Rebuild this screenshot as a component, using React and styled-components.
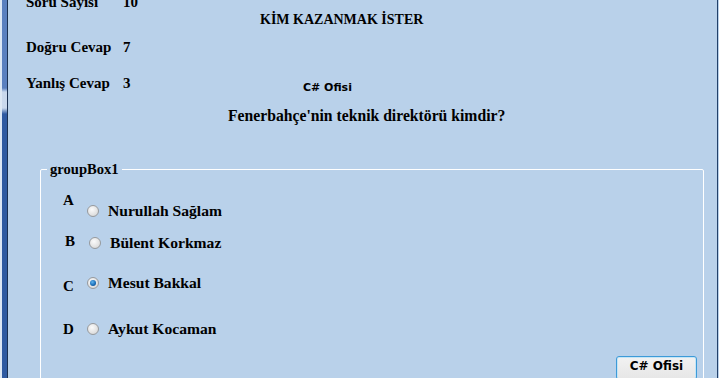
import React from 'react';
import styled, { createGlobalStyle } from 'styled-components';

const BG = '#b9d1ea';

const GlobalStyle = createGlobalStyle`
	html, body {
		margin: 0;
		padding: 0;
		background: ${BG};
		overflow: hidden;
	}
`;

const Window = styled.div`
	display: flex;
	width: 719px;
	height: 378px;
	overflow: hidden;
	background: ${BG};
	font-family: 'Liberation Serif', 'DejaVu Serif', serif;
	font-weight: bold;
	color: #000;
`;

const LeftFrame = styled.div`
	width: 8px;
	flex: none;
	background:
		linear-gradient(to right, #dce7f4 0 2px, transparent 2px 7px, #1b3152 7px 8px),
		linear-gradient(to bottom, #5a80bf 0 88px, #c9d8ec 92px 108px, #2f5aa1 114px 100%);
`;

const RightFrame = styled.div`
	width: 2px;
	flex: none;
	background: linear-gradient(to right, #22406a 0 1px, ${BG} 1px 2px);
`;

const Client = styled.div`
	flex: 1;
	padding-left: 18px;
	overflow: hidden;
`;

const Top = styled.div`
	display: flex;
	align-items: flex-start;
`;

const Stats = styled.div`
	width: 190px;
	flex: none;
	display: flex;
	flex-direction: column;
	margin-top: -7px;
`;

const Stat = styled.div`
	display: grid;
	grid-template-columns: 97px auto;
	font-size: 15px;
	line-height: 18px;
	margin-top: ${p => p.$gap || 0}px;
`;

const Headline = styled.div`
	display: flex;
	flex-direction: column;
	align-items: flex-start;
	padding-top: 11px;
`;

const Title = styled.div`
	font-size: 14px;
	line-height: 18px;
	margin-left: 44px;
`;

const Caption = styled.div`
	font-family: 'DejaVu Sans', 'Noto Sans', sans-serif;
	font-size: 11px;
	line-height: 16px;
	margin-left: 87px;
	margin-top: 51px;
`;

const Question = styled.div`
	font-size: 15.7px;
	line-height: 20px;
	margin-left: 12px;
	margin-top: 10px;
`;

const GroupBox = styled.fieldset`
	margin: 34px 13px 0 14px;
	padding: 0 0 40px;
	border: 1px solid #fff;
	border-radius: 2px;
	min-width: 0;
`;

const Legend = styled.legend`
	margin-left: 6px;
	padding: 0 3px;
	font-size: 14.6px;
	line-height: 18px;
`;

const Option = styled.div`
	display: flex;
	align-items: flex-start;
	margin-top: ${p => p.$gap}px;
	padding-left: ${p => 22 + (p.$nudge || 0)}px;
	font-size: 15.6px;
	line-height: 20px;
`;

const Letter = styled.span`
	width: 24px;
	flex: none;
	font-size: 15px;
	margin-top: ${p => p.$dy || 0}px;
`;

const Radio = styled.span`
	width: 12px;
	height: 12px;
	flex: none;
	margin-top: 4px;
	margin-right: 9px;
	border-radius: 50%;
	box-sizing: border-box;
	border: 1px solid #979a9d;
	background: radial-gradient(circle at 40% 35%, #fbfbfb 0%, #e2e2e2 60%, #cdcdcd 100%);
	display: flex;
	align-items: center;
	justify-content: center;

	&::after {
		content: '';
		display: ${p => (p.$checked ? 'block' : 'none')};
		width: 6px;
		height: 6px;
		border-radius: 50%;
		background: radial-gradient(circle at 40% 35%, #5fb4ef 0%, #1769b3 60%, #0d3f78 100%);
	}
`;

const Footer = styled.div`
	display: flex;
	justify-content: flex-end;
	margin-top: 17px;
	padding-right: 6px;
`;

const Button = styled.button`
	width: 81px;
	height: 24px;
	padding: 2px 0 0;
	border: 1px solid #3d9ad8;
	border-radius: 3px;
	box-shadow: inset 0 0 0 1px #c4e5f6;
	background: linear-gradient(to bottom, #f2f2f2, #e6e6e6);
	font-family: 'DejaVu Sans', 'Noto Sans', sans-serif;
	font-weight: bold;
	font-size: 12px;
	line-height: 14px;
	color: #000;
	display: flex;
	justify-content: center;
	align-items: flex-start;
`;

const options = [
	{ key: 'A', text: 'Nurullah Sağlam', gap: 23, dy: -11 },
	{ key: 'B', text: 'Bülent Korkmaz', gap: 12, dy: -2, nudge: 2 },
	{ key: 'C', text: 'Mesut Bakkal', gap: 20, dy: 3, checked: true },
	{ key: 'D', text: 'Aykut Kocaman', gap: 23, dy: 0 }
];

const App = () => (
	<>
		<GlobalStyle />
		<Window>
			<LeftFrame />
			<Client>
				<Top>
					<Stats>
						<Stat>
							<span>Soru Sayisi</span>
							<span>10</span>
						</Stat>
						<Stat $gap={27}>
							<span>Doğru Cevap</span>
							<span>7</span>
						</Stat>
						<Stat $gap={18}>
							<span>Yanlış Cevap</span>
							<span>3</span>
						</Stat>
					</Stats>
					<Headline>
						<Title>KİM KAZANMAK İSTER</Title>
						<Caption>C# Ofisi</Caption>
						<Question>Fenerbahçe'nin teknik direktörü kimdir?</Question>
					</Headline>
				</Top>
				<GroupBox>
					<Legend>groupBox1</Legend>
					{options.map(o => (
						<Option key={o.key} $gap={o.gap} $nudge={o.nudge}>
							<Letter $dy={o.dy}>{o.key}</Letter>
							<Radio $checked={o.checked} />
							<span>{o.text}</span>
						</Option>
					))}
					<Footer>
						<Button>C# Ofisi</Button>
					</Footer>
				</GroupBox>
			</Client>
			<RightFrame />
		</Window>
	</>
);

export default App;
